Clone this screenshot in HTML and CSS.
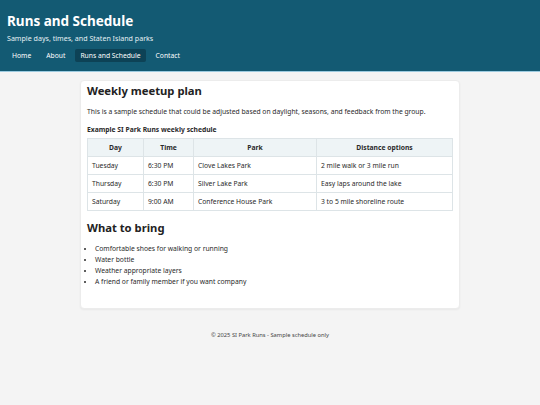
FILE: index.html
```html
<!DOCTYPE html>
<html lang="en">
<head>
<meta charset="utf-8">
<title>Runs and Schedule</title>
<link rel="stylesheet" href="styles.css">
</head>
<body>
<header class="site-header">
  <h1 class="site-title">Runs and Schedule</h1>
  <p class="site-tagline">Sample days, times, and Staten Island parks</p>
  <nav class="site-nav">
    <a href="#" class="nav-link">Home</a>
    <a href="#" class="nav-link">About</a>
    <a href="#" class="nav-link active">Runs and Schedule</a>
    <a href="#" class="nav-link">Contact</a>
  </nav>
</header>
<main class="card">
  <h2 class="section-title">Weekly meetup plan</h2>
  <p class="intro">This is a sample schedule that could be adjusted based on daylight, seasons, and feedback from the group.</p>
  <table class="schedule">
    <caption>Example SI Park Runs weekly schedule</caption>
    <thead>
      <tr>
        <th class="col-day">Day</th>
        <th class="col-time">Time</th>
        <th class="col-park">Park</th>
        <th class="col-dist">Distance options</th>
      </tr>
    </thead>
    <tbody>
      <tr><td>Tuesday</td><td>6:30 PM</td><td>Clove Lakes Park</td><td>2 mile walk or 3 mile run</td></tr>
      <tr><td>Thursday</td><td>6:30 PM</td><td>Silver Lake Park</td><td>Easy laps around the lake</td></tr>
      <tr><td>Saturday</td><td>9:00 AM</td><td>Conference House Park</td><td>3 to 5 mile shoreline route</td></tr>
    </tbody>
  </table>
  <h2 class="section-title bring">What to bring</h2>
  <ul class="bring-list">
    <li>Comfortable shoes for walking or running</li>
    <li>Water bottle</li>
    <li>Weather appropriate layers</li>
    <li>A friend or family member if you want company</li>
  </ul>
</main>
<footer class="site-footer">© 2025 SI Park Runs - Sample schedule only</footer>
</body>
</html>
```
FILE: styles.css
```css
* { box-sizing: border-box; }
html, body { margin: 0; padding: 0; }
body {
  background: #f4f4f4;
  color: #2a2a2a;
  font-family: "Noto Sans", "Open Sans", sans-serif;
  font-size: 6.75px;
  line-height: 1.5;
}
.site-header {
  background: #135a73;
  color: #fff;
  padding: 13px 7px 9px;
  border-bottom: 1px solid #9ccbe0;
}
.site-title {
  margin: 0;
  font-size: 13.5px;
  line-height: 17px;
  font-weight: 700;
}
.site-tagline {
  margin: 4px 0 0;
  font-size: 7.1px;
  line-height: 9px;
  color: #e6f0f4;
}
.site-nav {
  display: flex;
  gap: 5px;
  margin-top: 6px;
}
.nav-link {
  color: #fff;
  text-decoration: none;
  font-size: 6.75px;
  line-height: 9px;
  padding: 2px 5px;
  border-radius: 2px;
}
.nav-link.active { background: #0d4256; }
.card {
  display: block;
  width: 380px;
  margin: 8px auto 0;
  background: #fff;
  border-radius: 4px;
  border: 1px solid #ececec;
  box-shadow: 0 1px 2px rgba(0,0,0,0.05);
  padding: 2px 6px 21px;
}
.section-title {
  margin: 0;
  font-size: 11.25px;
  line-height: 16px;
  font-weight: 700;
  color: #222;
}
.intro { margin: 8px 0 0; line-height: 10px; }
.schedule {
  width: 100%;
  border-collapse: collapse;
  margin-top: 8px;
}
.schedule caption {
  text-align: left;
  font-weight: 700;
  line-height: 10px;
  padding-bottom: 3px;
}
.schedule th, .schedule td {
  border: 1px solid #dde4e7;
  padding: 4px 4px;
  line-height: 9px;
  text-align: left;
  font-weight: 400;
}
.schedule th {
  background: #eef4f6;
  font-weight: 700;
  text-align: center;
}
.col-day { width: 56px; }
.col-time { width: 50px; }
.col-park { width: 123px; }
.bring { margin-top: 9px; }
.bring-list {
  margin: 7px 0 0;
  padding-left: 8px;
  line-height: 11px;
}
.site-footer {
  text-align: center;
  font-size: 5.75px;
  color: #444;
  padding: 22px 0;
}
```
